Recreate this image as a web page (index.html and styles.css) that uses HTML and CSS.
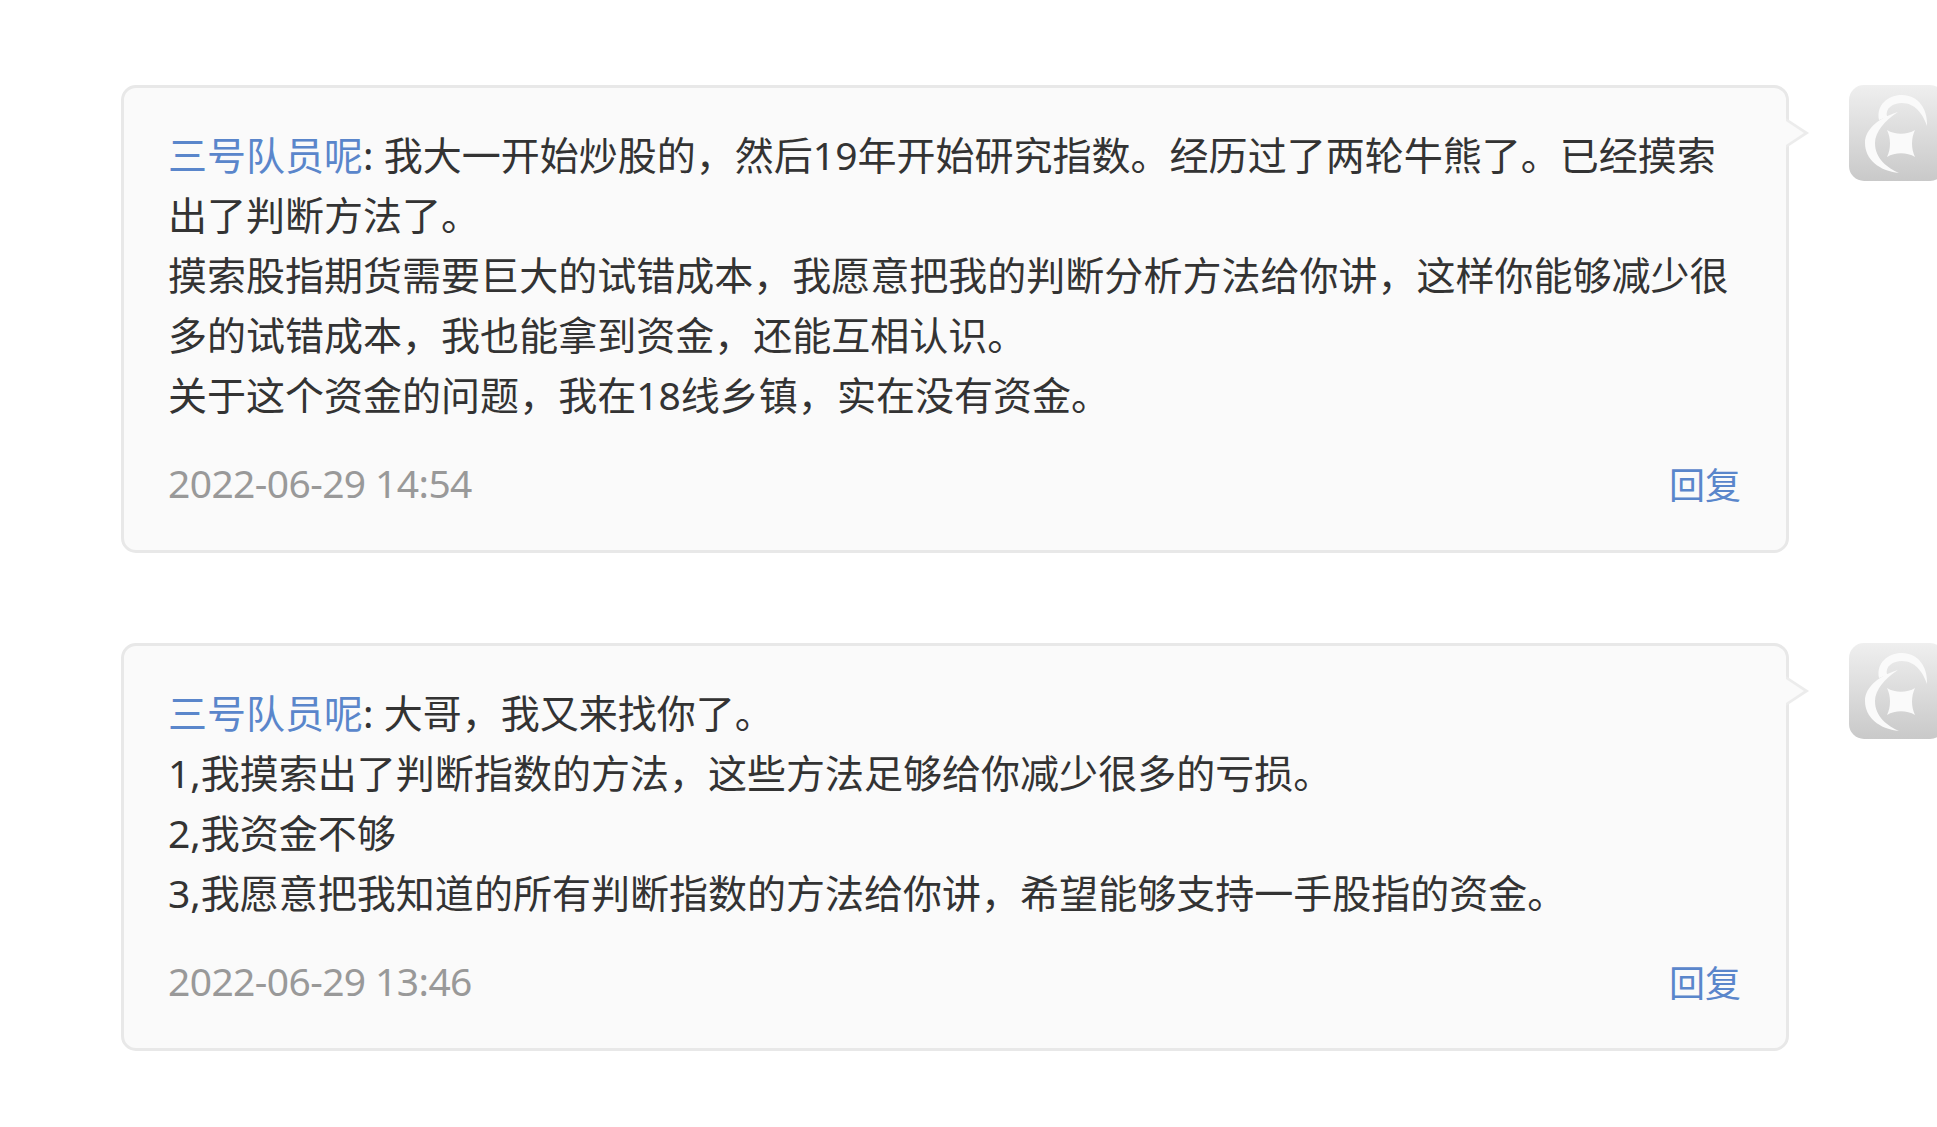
FILE: index.html
```html
<!DOCTYPE html>
<html lang="zh-CN">
<head>
<meta charset="utf-8">
<title>评论</title>
<link rel="stylesheet" href="styles.css">
</head>
<body>
<main class="list">
  <article class="item">
    <div class="card">
      <p class="text"><a class="name">三号队员呢</a>: 我大一开始炒股的，然后19年开始研究指数。经历过了两轮牛熊了。已经摸索出了判断方法了。<br>摸索股指期货需要巨大的试错成本，我愿意把我的判断分析方法给你讲，这样你能够减少很多的试错成本，我也能拿到资金，还能互相认识。<br>关于这个资金的问题，我在18线乡镇，实在没有资金。</p>
      <div class="meta"><time class="date">2022-06-29 14:54</time><a class="reply">回复</a></div>
    </div>
    <div class="avatar">
      <svg class="logo" viewBox="0 0 96 96" width="96" height="96"><path class="mark" d="M30 35C27 20 39 10 53 10C69 10 79 24 78 41C74 29 66 18 53 18C44 18 36 23 38 32Z"/><path class="mark" d="M49 27C32 32 16 43 16 58C16 74 30 86 50 88C39 83 26 74 26 58C26 47 36 35 49 27Z"/><path class="mark" d="M38 45C46 50 58 50 66 45C62 53 62 64 66 72C58 67 46 67 38 72C42 64 42 53 38 45Z"/></svg>
    </div>
  </article>
  <article class="item">
    <div class="card">
      <p class="text"><a class="name">三号队员呢</a>: 大哥，我又来找你了。<br>1,我摸索出了判断指数的方法，这些方法足够给你减少很多的亏损。<br>2,我资金不够<br>3,我愿意把我知道的所有判断指数的方法给你讲，希望能够支持一手股指的资金。</p>
      <div class="meta"><time class="date">2022-06-29 13:46</time><a class="reply">回复</a></div>
    </div>
    <div class="avatar">
      <svg class="logo" viewBox="0 0 96 96" width="96" height="96"><path class="mark" d="M30 35C27 20 39 10 53 10C69 10 79 24 78 41C74 29 66 18 53 18C44 18 36 23 38 32Z"/><path class="mark" d="M49 27C32 32 16 43 16 58C16 74 30 86 50 88C39 83 26 74 26 58C26 47 36 35 49 27Z"/><path class="mark" d="M38 45C46 50 58 50 66 45C62 53 62 64 66 72C58 67 46 67 38 72C42 64 42 53 38 45Z"/></svg>
    </div>
  </article>
</main>
</body>
</html>
```
FILE: styles.css
```css
html, body {
  margin: 0;
  background: #fff;
  overflow: hidden;
  height: 100%;
}
body {
  font-family: "Noto Sans", "Noto Sans CJK SC", sans-serif;
  color: #333;
}
.list {
  display: flex;
  flex-direction: column;
  gap: 90px;
  padding: 85px 0 0 121px;
  width: 1900px;
}
.item {
  display: flex;
  align-items: flex-start;
  gap: 60px;
}
.card {
  position: relative;
  box-sizing: border-box;
  width: 1668px;
  flex: none;
  padding: 37px 45px 34px 44px;
  background: #fafafa;
  border: 3px solid #e8e8e8;
  border-radius: 15px;
}
.card::before,
.card::after {
  content: "";
  position: absolute;
  left: 100%;
  clip-path: polygon(0 0, 100% 50%, 0 100%);
  filter: blur(0.5px);
}
.card::before {
  top: 30px;
  width: 23px;
  height: 30px;
  background: #ececec;
}
.card::after {
  top: 33px;
  width: 18px;
  height: 24px;
  background: #fafafa;
}
.text {
  margin: 0;
  font-size: 39.03px;
  line-height: 60px;
}
.name, .reply {
  color: #5a86cb;
}
.meta {
  display: flex;
  justify-content: space-between;
  align-items: center;
  margin-top: 31px;
}
.date {
  font-size: 39px;
  letter-spacing: -0.6px;
  color: #999;
  line-height: 54px;
  padding-bottom: 6px;
}
.reply {
  font-size: 36px;
  line-height: 60px;
}
.avatar {
  flex: none;
  width: 96px;
  height: 96px;
  border-radius: 15px;
  background: linear-gradient(#efefef, #c9c9c9);
}
.logo {
  display: block;
  filter: blur(0.5px);
}
.mark {
  fill: #fafafa;
}
```
